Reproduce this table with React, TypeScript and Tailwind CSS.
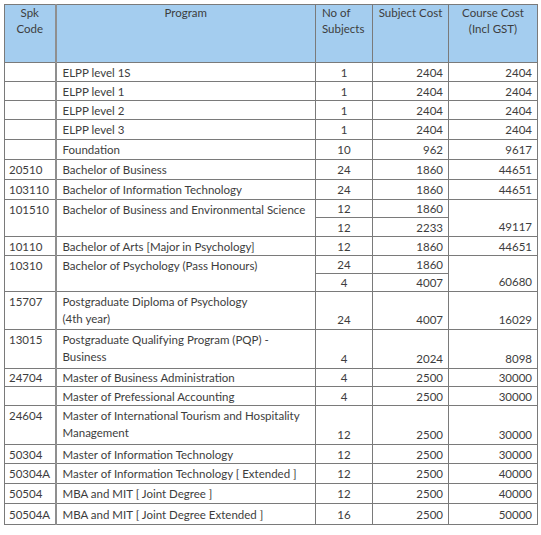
import React from "react";

type Row = {
  code?: string;
  program: React.ReactNode;
  subs: { n: string; cost: string; h: number }[];
  course: string;
  tall?: boolean;
};

const rows: Row[] = [
  { program: "ELPP level 1S", subs: [{ n: "1", cost: "2404", h: 19 }], course: "2404" },
  { program: "ELPP level 1", subs: [{ n: "1", cost: "2404", h: 19 }], course: "2404" },
  { program: "ELPP level 2", subs: [{ n: "1", cost: "2404", h: 19 }], course: "2404" },
  { program: "ELPP level 3", subs: [{ n: "1", cost: "2404", h: 20 }], course: "2404" },
  { program: "Foundation", subs: [{ n: "10", cost: "962", h: 20 }], course: "9617" },
  { code: "20510", program: "Bachelor of Business", subs: [{ n: "24", cost: "1860", h: 20 }], course: "44651" },
  { code: "103110", program: "Bachelor of Information Technology", subs: [{ n: "24", cost: "1860", h: 20 }], course: "44651" },
  {
    code: "101510",
    program: "Bachelor of Business and Environmental Science",
    subs: [
      { n: "12", cost: "1860", h: 18 },
      { n: "12", cost: "2233", h: 19 },
    ],
    course: "49117",
  },
  { code: "10110", program: "Bachelor of Arts [Major in Psychology]", subs: [{ n: "12", cost: "1860", h: 19 }], course: "44651" },
  {
    code: "10310",
    program: "Bachelor of Psychology (Pass Honours)",
    subs: [
      { n: "24", cost: "1860", h: 16 },
      { n: "4", cost: "4007", h: 17 },
    ],
    course: "60680",
  },
  {
    code: "15707",
    program: (
      <>
        Postgraduate Diploma of Psychology
        <br />
        (4th year)
      </>
    ),
    subs: [{ n: "24", cost: "4007", h: 38 }],
    course: "16029",
    tall: true,
  },
  {
    code: "13015",
    program: (
      <>
        Postgraduate Qualifying Program (PQP) -
        <br />
        Business
      </>
    ),
    subs: [{ n: "4", cost: "2024", h: 39 }],
    course: "8098",
    tall: true,
  },
  { code: "24704", program: "Master of Business Administration", subs: [{ n: "4", cost: "2500", h: 18 }], course: "30000" },
  { program: "Master of Prefessional Accounting", subs: [{ n: "4", cost: "2500", h: 19 }], course: "30000" },
  {
    code: "24604",
    program: (
      <>
        Master of International Tourism and Hospitality
        <br />
        Management
      </>
    ),
    subs: [{ n: "12", cost: "2500", h: 39 }],
    course: "30000",
    tall: true,
  },
  { code: "50304", program: "Master of Information Technology", subs: [{ n: "12", cost: "2500", h: 19 }], course: "30000" },
  { code: "50304A", program: "Master of Information Technology [ Extended ]", subs: [{ n: "12", cost: "2500", h: 20 }], course: "40000" },
  { code: "50504", program: "MBA and MIT [ Joint Degree ]", subs: [{ n: "12", cost: "2500", h: 20 }], course: "40000" },
  { code: "50504A", program: "MBA and MIT [ Joint Degree Extended ]", subs: [{ n: "16", cost: "2500", h: 21 }], course: "50000" },
];

const cell = "border border-[#7a7a7a] px-0 py-0 leading-[17px]";
const head = "border border-[#7a7a7a] px-0 py-0 leading-[16px] align-top font-normal";

export default function App() {
  return (
    <div
      className="w-[541px] h-[535px] bg-white pt-[4px] pl-[4px] text-[11.5px] text-[#3d3d3d]"
      style={{ fontFamily: "Lato, 'Open Sans', sans-serif" }}
    >
      <table className="border-collapse table-fixed w-[533px]">
        <colgroup>
          <col className="w-[51px]" />
          <col className="w-[260px]" />
          <col className="w-[57px]" />
          <col className="w-[76px]" />
          <col className="w-[89px]" />
        </colgroup>
        <thead>
          <tr className="h-[58px] bg-[#a4cdef]">
            <th className={`${head} border-r-2 border-r-[#8f8f8f] text-center`}>
              Spk
              <br />
              Code
            </th>
            <th className={`${head} text-center`}>Program</th>
            <th className={`${head} text-left pl-[6px]`}>
              No of
              <br />
              Subjects
            </th>
            <th className={`${head} text-center`}>Subject Cost</th>
            <th className={`${head} text-center`}>
              Course Cost
              <br />
              (Incl GST)
            </th>
          </tr>
        </thead>
        <tbody>
          {rows.map((r, i) => {
            const span = r.subs.length;
            const multi = span > 1 || r.tall;
            const vAlign = multi ? "align-top" : "align-middle";
            const numAlign = multi ? "align-bottom pb-[1px]" : "align-middle";
            return r.subs.map((s, j) => (
              <tr key={`${i}-${j}`} style={{ height: s.h }}>
                {j === 0 && (
                  <>
                    <td
                      rowSpan={span}
                      className={`${cell} border-r-2 border-r-[#8f8f8f] ${vAlign} pl-[4px] ${multi ? "pt-[1px]" : ""}`}
                    >
                      {r.code}
                    </td>
                    <td rowSpan={span} className={`${cell} ${vAlign} pl-[6px] whitespace-nowrap ${multi ? "pt-[1px]" : ""}`}>
                      {r.program}
                    </td>
                  </>
                )}
                <td className={`${cell} text-center ${r.tall ? numAlign : "align-middle"}`}>{s.n}</td>
                <td className={`${cell} text-right pr-[5px] ${r.tall ? numAlign : "align-middle"}`}>{s.cost}</td>
                {j === 0 && (
                  <td rowSpan={span} className={`${cell} text-right pr-[5px] ${multi ? numAlign : "align-middle"}`}>
                    {r.course}
                  </td>
                )}
              </tr>
            ));
          })}
        </tbody>
      </table>
    </div>
  );
}
